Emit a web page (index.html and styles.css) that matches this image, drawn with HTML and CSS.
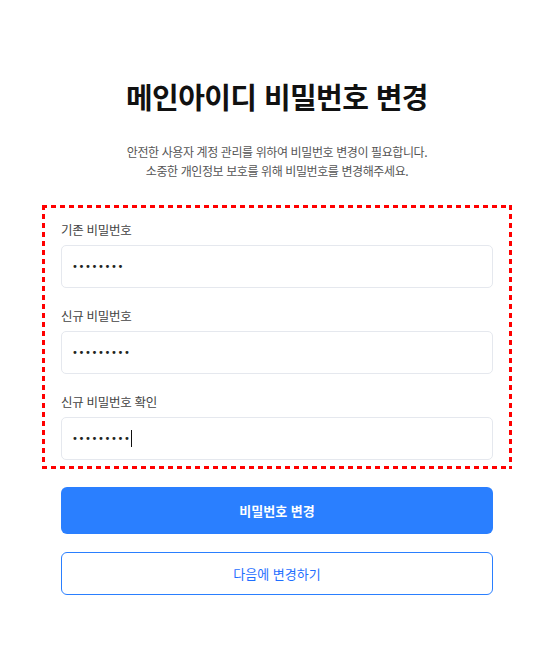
FILE: index.html
```html
<!DOCTYPE html>
<html lang="ko">
<head>
<meta charset="utf-8">
<title>메인아이디 비밀번호 변경</title>
<link rel="stylesheet" href="styles.css">
</head>
<body>
<main class="page">
  <h1 class="title">메인아이디 비밀번호 변경</h1>
  <p class="desc">안전한 사용자 계정 관리를 위하여 비밀번호 변경이 필요합니다.<br>소중한 개인정보 보호를 위해 비밀번호를 변경해주세요.</p>
  <form class="form">
    <div class="fields">
      <div class="field">
        <label class="label" for="cur">기존 비밀번호</label>
        <input class="input" id="cur" type="password" value="12345678">
      </div>
      <div class="field">
        <label class="label" for="new">신규 비밀번호</label>
        <input class="input" id="new" type="password" value="123456789">
      </div>
      <div class="field">
        <label class="label" for="cfm">신규 비밀번호 확인</label>
        <div class="input input-fake"><span class="dots">•••••••••</span><span class="caret"></span></div>
      </div>
    </div>
    <button type="button" class="btn btn-primary">비밀번호 변경</button>
    <button type="button" class="btn btn-outline">다음에 변경하기</button>
  </form>
</main>
</body>
</html>
```

FILE: styles.css
```css
* { box-sizing: border-box; }
html, body { margin: 0; padding: 0; background: #fff; }
body {
  font-family: "Noto Sans CJK KR", "Noto Sans", sans-serif;
  color: #222;
}
.page {
  width: 432px;
  margin: 0 auto;
  padding-top: 74px;
  display: flex;
  flex-direction: column;
  align-items: stretch;
}
.title {
  margin: 0;
  text-align: center;
  font-size: 29px;
  font-weight: 700;
  line-height: 44px;
  letter-spacing: -0.6px;
  color: #111;
}
.desc {
  margin: 24px 0 0;
  text-align: center;
  font-size: 12px;
  line-height: 19px;
  color: #555;
  letter-spacing: -0.4px;
}
.form {
  display: flex;
  flex-direction: column;
  margin-top: 25px;
}
.fields {
  margin: 0 -19px;
  padding: 16px 19px 9px;
  background:
    repeating-linear-gradient(90deg, #f00 0 5px, transparent 5px 9px) top left / 100% 3px no-repeat,
    repeating-linear-gradient(90deg, #f00 0 5px, transparent 5px 9px) bottom left / 100% 3px no-repeat,
    repeating-linear-gradient(180deg, #f00 0 5px, transparent 5px 9px) top left / 3px 100% no-repeat,
    repeating-linear-gradient(180deg, #f00 0 5px, transparent 5px 9px) top right / 3px 100% no-repeat;
  display: flex;
  flex-direction: column;
  gap: 19px;
}
.field {
  display: flex;
  flex-direction: column;
  gap: 6px;
}
.label {
  font-size: 12.5px;
  line-height: 18px;
  color: #444;
  letter-spacing: -0.3px;
}
.input {
  height: 43px;
  width: 100%;
  border: 1px solid #e5e8ee;
  border-radius: 5px;
  padding: 0 10px;
  font-family: "DejaVu Sans", sans-serif;
  font-size: 10px;
  color: #222;
  letter-spacing: 0.6px;
  outline: none;
  background: #fff;
}
.input-fake {
  display: flex;
  align-items: center;
}
.dots {
  font-size: 10px;
  letter-spacing: 0.6px;
  color: #222;
}
.caret {
  display: inline-block;
  width: 1px;
  height: 17px;
  background: #111;
  margin-left: 0;
}
.btn {
  width: 100%;
  font-family: "Noto Sans CJK KR", "Noto Sans", sans-serif;
  font-size: 13px;
  border-radius: 6px;
  cursor: pointer;
}
.btn-primary {
  margin-top: 18px;
  height: 47px;
  background: #2a7fff;
  border: none;
  color: #fff;
  font-weight: 700;
}
.btn-outline {
  margin-top: 18px;
  height: 43px;
  background: #fff;
  border: 1px solid #2a7fff;
  color: #1f6fff;
  font-weight: 400;
}
```
